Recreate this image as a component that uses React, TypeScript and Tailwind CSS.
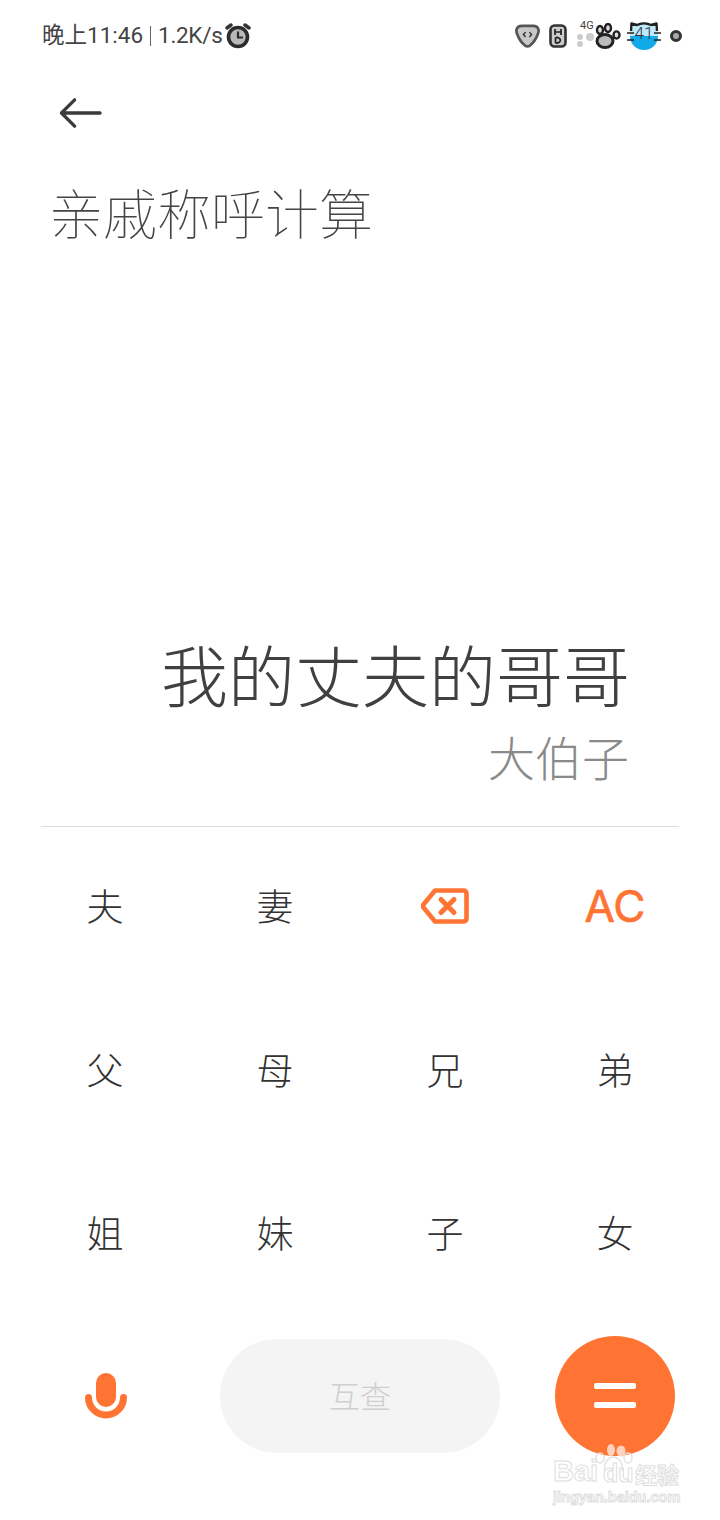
const ORANGE = '#ff7433'

const rows: (string | null)[][] = [
  ['夫', '妻', null, null],
  ['父', '母', '兄', '弟'],
  ['姐', '妹', '子', '女'],
]

function AlarmIcon() {
  return (
    <svg className="ml-[2px]" width="28" height="26" viewBox="0 0 28 26">
      <path d="M3 5 L7 2 M25 5 L21 2" stroke="#333" strokeWidth="3.500" strokeLinecap="round" />
      <circle cx="14" cy="14" r="9.500" fill="#b9b9b9" stroke="#2c2c2c" strokeWidth="3.600" />
      <path d="M14 8.500 V14.500 H19" fill="none" stroke="#2c2c2c" strokeWidth="2.200" />
    </svg>
  )
}

function StatusIcons() {
  return (
    <div className="flex items-center">
      <svg width="25" height="25" viewBox="0 0 26 26">
        <path d="M7 3 H19 C24 3 25.500 7 24 11 C22 16.500 19 21 15.500 23.500 C14 24.500 12 24.500 10.500 23.500 C7 21 4 16.500 2 11 C0.500 7 2 3 7 3 Z" fill="#c8c8c8" stroke="#555" strokeWidth="2.800" />
        <path d="M11 9.500 L8.800 12 L11 14.500 M15 9.500 L17.200 12 L15 14.500" fill="none" stroke="#333" strokeWidth="1.500" />
      </svg>
      <svg className="ml-[9px]" width="18" height="24" viewBox="0 0 18 24">
        <rect x="1.500" y="1.500" width="15" height="21" rx="4" fill="#ccc" stroke="#333" strokeWidth="2.600" />
        <path d="M6 5 V11 M12 5 V11 M6 8 H12 M6.500 13.500 V19 M6.500 13.500 C13 13 13 19.500 6.500 19" fill="none" stroke="#222" strokeWidth="1.700" />
      </svg>
      <div className="relative ml-[10px] h-[30px] w-[18px]">
        <span className="absolute left-[3px] top-[-1px] text-[11px] leading-3 text-[#444] [font-family:'Roboto',sans-serif]">4G</span>
        <div className="absolute left-0 top-[13px] h-[6px] w-[6px] rounded-full bg-[#ccc]" />
        <div className="absolute left-0 top-[20px] h-[6px] w-[6px] rounded-full bg-[#ccc]" />
        <div className="absolute left-[9px] top-[12px] h-[8px] w-[8px] rounded-full bg-[#ccc]" />
      </div>
      <svg width="26" height="26" viewBox="0 0 26 26">
        <ellipse cx="10" cy="18" rx="8" ry="6.500" fill="#bbb" stroke="#222" strokeWidth="3" />
        <ellipse cx="5" cy="7" rx="3" ry="4" fill="#ddd" stroke="#222" strokeWidth="2.400" />
        <ellipse cx="13" cy="5" rx="3" ry="4" fill="#ddd" stroke="#222" strokeWidth="2.400" />
        <ellipse cx="21.500" cy="12" rx="3" ry="3.600" fill="#ddd" stroke="#222" strokeWidth="2.400" />
      </svg>
      <div className="relative ml-[6px] h-[30px] w-[34px]">
        <svg className="absolute left-0 top-0" width="34" height="30" viewBox="0 0 34 30">
          <circle cx="17" cy="15" r="14" fill="#bde9fb" />
          <path d="M3 15 A14 14 0 0 0 31 15 Z" fill="#12a9e9" />
          <path d="M4 10 L4.500 2.500 L10 4 C14 2 20 2 24 4 L29.500 2.500 L30 10" fill="none" stroke="#222" strokeWidth="2.400" strokeLinejoin="round" />
          <path d="M0 12 H7 M0 19 H7 M27 12 H34 M27 19 H34" stroke="#222" strokeWidth="1.600" />
        </svg>
        <span className="absolute inset-0 flex items-center justify-center pb-[3px] text-[17px] font-light text-[#333] [font-family:'Roboto',sans-serif]">41</span>
      </div>
      <div className="ml-[9px] h-[12px] w-[12px] rounded-full border-[3px] border-[#333] bg-[#aaa]" />
    </div>
  )
}

function KeyCell({ label }: { label: string }) {
  return (
    <div className="flex h-full items-center justify-center text-[37px] font-light leading-none text-[#333]">
      {label}
    </div>
  )
}

function Watermark() {
  return (
    <div className="pointer-events-none absolute left-[550px] top-[1441px] h-[66px] w-[136px] text-transparent [-webkit-text-stroke:1px_#dedede]">
      <svg className="absolute left-[43px] top-[2px]" width="40" height="32" viewBox="0 0 40 32">
        <g fill="none" stroke="#e2e2e2" strokeWidth="1.500">
          <ellipse cx="7" cy="15" rx="4" ry="5" />
          <ellipse cx="35" cy="15" rx="4" ry="5" />
          <path d="M12 28 C10 20 16 14 20 14 C25 14 31 20 29 28" />
        </g>
        <ellipse cx="18" cy="7" rx="4" ry="6" fill="#ffd3bf" />
        <ellipse cx="28" cy="8" rx="4.500" ry="5.500" fill="#ffd3bf" />
      </svg>
      <span className="absolute left-[3px] top-[14px] text-[29px] font-bold leading-8 [font-family:'Liberation_Sans',sans-serif]">Bai</span>
      <span className="absolute left-[53px] top-[18px] text-[25px] font-bold leading-7 [font-family:'Liberation_Sans',sans-serif]">du</span>
      <span className="absolute left-[85px] top-[18px] text-[22px] font-bold leading-7">经验</span>
      <span className="absolute left-[3px] top-[46px] whitespace-nowrap text-[14.500px] font-bold leading-5 [font-family:'Liberation_Sans',sans-serif]">jingyan.baidu.com</span>
    </div>
  )
}

export default function App() {
  return (
    <div className="relative flex h-[1520px] w-[720px] flex-col overflow-hidden bg-white [font-family:'Noto_Sans_CJK_SC','Noto_Sans',sans-serif]">
      {/* status bar */}
      <div className="flex h-[70px] items-center justify-between pt-[1px] pl-[42px] pr-[38px] text-[22.500px] text-[#444] [font-family:'Roboto','Noto_Sans_CJK_SC',sans-serif]">
        <div className="flex items-center">
          <span>晚上11:46</span>
          <div className="mx-[7px] h-[20px] w-px bg-[#666]" />
          <span className="tracking-[-0.3px]">1.2K/s</span>
          <AlarmIcon />
        </div>
        <StatusIcons />
      </div>

      {/* back */}
      <div className="pl-[59px] pt-[26px]">
        <svg width="43" height="34" viewBox="0 0 44 34">
          <path d="M42 17 H3 M16 3.500 L2.500 17 L16 30.500" fill="none" stroke="#3a3a3a" strokeWidth="3.400" strokeLinecap="round" strokeLinejoin="round" />
        </svg>
      </div>

      <h1 className="mt-[44px] pl-[49px] text-[54px] font-thin leading-[76px] text-[#444]">亲戚称呼计算</h1>

      {/* expression + result */}
      <div className="mt-[378px] flex flex-col items-end pr-[90px]">
        <div className="text-[67px] font-light leading-[90px] text-[#404040]">我的丈夫的哥哥</div>
        <div className="mr-[1px] mt-[8px] text-[47px] font-light leading-[60px] text-[#8a8a8a]">大伯子</div>
      </div>

      <div className="mx-[41px] mt-[40px] h-px bg-[#dcdcdc]" />

      {/* keys */}
      <div className="mx-[20px] mt-[-3px] grid grid-cols-4 auto-rows-[163.500px]">
        {rows.map((row, i) =>
          row.map((label, j) =>
            label ? (
              <KeyCell key={`${i}-${j}`} label={label} />
            ) : j === 2 ? (
              <div key="del" className="flex items-center justify-center">
                <svg width="48" height="36" viewBox="0 0 48 36">
                  <path d="M14 2.500 H42 C44.500 2.500 45.500 3.500 45.500 6 V30 C45.500 32.500 44.500 33.500 42 33.500 H14 L2.500 19.500 C1.800 18.500 1.800 17.500 2.500 16.500 Z" fill="none" stroke={ORANGE} strokeWidth="4.600" strokeLinejoin="round" />
                  <path d="M20 11.500 L33 24.500 M33 11.500 L20 24.500" stroke={ORANGE} strokeWidth="5" strokeLinecap="round" />
                </svg>
              </div>
            ) : (
              <div key="ac" className="flex items-center justify-center text-[44px] font-normal leading-none text-[#ff7433] [-webkit-text-stroke:0.700px_#ff7433] [font-family:'Inter',sans-serif]">
                AC
              </div>
            ),
          ),
        )}
      </div>

      {/* bottom actions */}
      <div className="mx-[20px] mt-[21px] grid grid-cols-[170px_1fr_170px] items-center">
        <div className="flex justify-center pl-[2px]">
          <svg width="42" height="46" viewBox="0 0 42 46">
            <rect x="11" y="0" width="20" height="34" rx="10" fill={ORANGE} />
            <path d="M3.500 24.500 A17.500 17.500 0 0 0 38.500 24.500" fill="none" stroke={ORANGE} strokeWidth="7" strokeLinecap="round" />
          </svg>
        </div>
        <div className="flex justify-center">
          <button className="flex h-[114px] w-[280px] items-center justify-center rounded-full bg-[#f4f4f4] text-[31px] font-light text-[#cfcfcf]">
            互查
          </button>
        </div>
        <div className="flex justify-center">
          <div className="flex h-[120px] w-[120px] flex-col items-center justify-center gap-[13px] rounded-full bg-[#ff7433]">
            <div className="h-[6px] w-[42px] rounded-[2px] bg-white" />
            <div className="h-[6px] w-[42px] rounded-[2px] bg-white" />
          </div>
        </div>
      </div>

      <Watermark />
    </div>
  )
}
